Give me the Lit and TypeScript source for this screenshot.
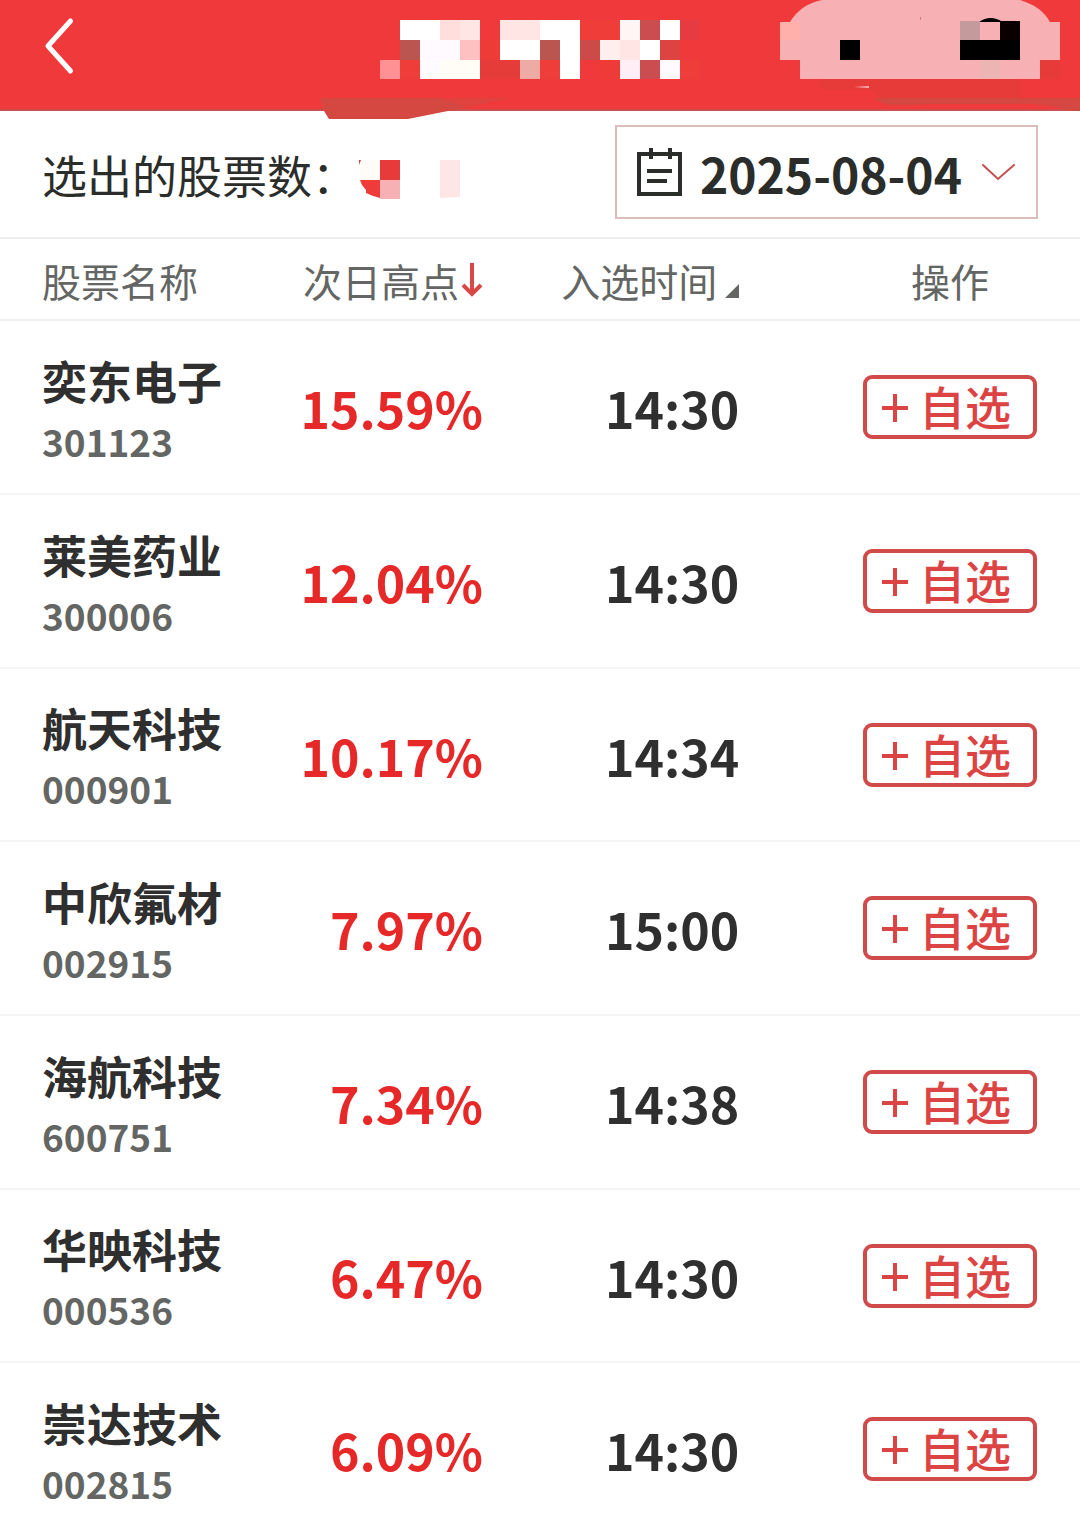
import { LitElement, html, svg, css } from "lit";
import { customElement, property, state } from "lit/decorators.js";

interface Stock {
  name: string;
  code: string;
  high: string;
  time: string;
}

const STOCKS: Stock[] = [
  { name: "奕东电子", code: "301123", high: "15.59%", time: "14:30" },
  { name: "莱美药业", code: "300006", high: "12.04%", time: "14:30" },
  { name: "航天科技", code: "000901", high: "10.17%", time: "14:34" },
  { name: "中欣氟材", code: "002915", high: "7.97%", time: "15:00" },
  { name: "海航科技", code: "600751", high: "7.34%", time: "14:38" },
  { name: "华映科技", code: "000536", high: "6.47%", time: "14:30" },
  { name: "崇达技术", code: "002815", high: "6.09%", time: "14:30" },
];

// Mosaic tiles: x, y, width, height, fill
type Tile = [number, number, number, number, string];

const TITLE_TILES: Tile[] = [
  [80, 60, 20, 19, "#ff9194"],
  [100, 60, 20, 19, "#ef3d39"],
  [100, 20, 40, 20, "#ffffff"],
  [140, 20, 20, 20, "#ffdedc"],
  [160, 20, 20, 20, "#ffe6e5"],
  [100, 40, 20, 20, "#bb5550"],
  [120, 40, 40, 20, "#fffaff"],
  [160, 40, 20, 20, "#ffc0c2"],
  [180, 40, 20, 20, "#ee3b37"],
  [120, 60, 20, 19, "#fdfbff"],
  [140, 60, 40, 19, "#fffdf5"],
  [180, 60, 40, 19, "#e63c39"],
  [200, 20, 40, 20, "#ffe6e5"],
  [240, 20, 40, 20, "#ffffff"],
  [200, 40, 40, 20, "#ffffff"],
  [240, 40, 20, 20, "#bb5550"],
  [260, 40, 20, 39, "#ffffff"],
  [220, 60, 20, 19, "#eeaaa5"],
  [240, 60, 20, 19, "#ef3d39"],
  [280, 20, 40, 20, "#ef3d39"],
  [280, 40, 20, 20, "#cc4a48"],
  [300, 40, 20, 20, "#ffeeee"],
  [300, 60, 20, 19, "#ef3b37"],
  [320, 20, 20, 20, "#fff5f5"],
  [320, 40, 20, 20, "#ffe6e4"],
  [320, 60, 20, 19, "#ffeef6"],
  [340, 20, 20, 20, "#cc4d4f"],
  [340, 40, 20, 20, "#ffffff"],
  [340, 60, 20, 19, "#cc4d4f"],
  [360, 20, 20, 20, "#ffffff"],
  [360, 40, 20, 20, "#dd4340"],
  [360, 60, 20, 19, "#fffaff"],
  [380, 20, 20, 20, "#e63b40"],
  [380, 60, 20, 19, "#ef3d39"],
];

const tiles = (list: Tile[]) =>
  list.map(([x, y, w, h, fill]) => svg`<rect x=${x} y=${y} width=${w} height=${h} fill=${fill} />`);

@customElement("screen-header")
export class ScreenHeader extends LitElement {
  static styles = css`
    :host {
      display: block;
    }
    .bar {
      position: relative;
      display: flex;
      align-items: flex-start;
      box-sizing: border-box;
      height: 111px;
      padding: 14px 28px;
      background: #f0393a;
      border-bottom: 2px solid #c9504e;
    }
    .back {
      display: flex;
      padding: 0;
      border: 0;
      background: none;
      cursor: pointer;
    }
    .title-art,
    .capsule-art {
      position: absolute;
      top: 0;
      pointer-events: none;
    }
    .title-art {
      left: calc(50% - 240px);
    }
    .capsule-art {
      right: 0;
    }
  `;

  render() {
    return html`
      <header class="bar">
        <button class="back" aria-label="返回">
          <svg width="64" height="64" viewBox="0 0 64 64" fill="none" stroke="#fff" stroke-width="5"
            stroke-linecap="round" stroke-linejoin="round" aria-hidden="true">
            <path d="M42.500 7 20 32 42.500 57" />
          </svg>
        </button>
        <svg class="title-art" width="440" height="120" viewBox="0 0 440 120" aria-hidden="true">
          <path d="M20 98H210L148 111 108 119H29L24 111Z" fill="#d54841" />
          <path d="M140 98H210L165 107Z" fill="#e04240" />
          <g shape-rendering="crispEdges">${tiles(TITLE_TILES)}</g>
        </svg>
        <svg class="capsule-art" width="340" height="111" viewBox="0 0 340 111" aria-hidden="true">
          <path d="M80 79H280V98H140L132 90 80 89Z" fill="#e63b38" />
          <rect x="300" y="60" width="20" height="19" fill="#e63b38" />
          <path d="M134 98H340V111H330Q315 105 285 104H200Q165 105 148 105 140 103 134 98Z" fill="#d54841" />
          <path d="M114 87 129 86V88Z" fill="#f7b1b4" />
          <path d="M50 22Q61 4 82 0H280Q301 6 310 22H320V60H300V79H60V60H40V22Z" fill="#f7b1b4" />
          <rect x="40" y="22" width="20" height="18" fill="#ffb0aa" />
          <path d="M239 22Q250 14 263 22Z" fill="#000" />
          <g shape-rendering="crispEdges">
            <rect x="180" y="17" width="1" height="3" fill="#d47b80" />
            <rect x="100" y="40" width="20" height="20" fill="#000" />
            <rect x="220" y="21" width="20" height="19" fill="#c59a9c" />
            <rect x="240" y="22" width="20" height="18" fill="#f7b1b4" />
            <rect x="260" y="21" width="20" height="19" fill="#0b0000" />
            <rect x="220" y="40" width="60" height="20" fill="#000" />
            <rect x="240" y="60" width="20" height="19" fill="#ecb4b3" />
          </g>
        </svg>
      </header>
    `;
  }
}

@customElement("summary-bar")
export class SummaryBar extends LitElement {
  @property() date = "";

  static styles = css`
    :host {
      display: block;
    }
    .summary {
      display: flex;
      align-items: center;
      justify-content: space-between;
      padding: 14px 42px 18px;
      border-bottom: 2px solid #eeeeee;
    }
    .count {
      display: flex;
      align-items: flex-end;
      padding-top: 5px;
      font-size: 45px;
      line-height: 64px;
      color: #2b2d2b;
    }
    .count svg {
      margin-bottom: 7px;
    }
    .date {
      display: flex;
      align-items: center;
      box-sizing: border-box;
      height: 94px;
      padding: 0 20px 0 19px;
      border: 2px solid #dfbcbc;
      background: #fff;
      color: #2b2d2b;
      font: inherit;
      font-size: 48px;
      font-weight: 700;
      line-height: 64px;
      cursor: pointer;
    }
    .value {
      margin: 2px 18px 0 16px;
    }
  `;

  render() {
    return html`
      <section class="summary">
        <div class="count">
          <span>选出的股票数：</span>
          <svg width="104" height="40" viewBox="0 0 104 40" aria-hidden="true">
            <g shape-rendering="crispEdges">
              <rect x="3" y="0" width="20" height="20" fill="#fffcf7" />
              <rect x="23" y="0" width="20" height="20" fill="#e63b3a" />
              <rect x="23" y="20" width="20" height="19" fill="#f7b1b4" />
            </g>
            <path d="M3 20H23V38Q15 36 9 33V30L5 25Z" fill="#ef3b3a" />
            <path d="M2 0H4L2 5Z" fill="#d0403f" />
            <path d="M83 0H103V37L83 38Z" fill="#fee6e6" />
          </svg>
        </div>
        <button class="date">
          <svg width="48" height="52" viewBox="0 0 48 52" fill="none" stroke="#2b2d2b" stroke-width="4" aria-hidden="true">
            <path d="M3 8H44V48H3ZM15 2V13M34 2V13" />
            <path d="M11 25H36M11 35H31" />
          </svg>
          <span class="value">${this.date}</span>
          <svg width="36" height="20" viewBox="0 0 36 20" fill="none" stroke="#c4504f" stroke-width="2"
            stroke-linecap="round" aria-hidden="true">
            <path d="M3 3 18 17 34 3" />
          </svg>
        </button>
      </section>
    `;
  }
}

@customElement("stock-table")
export class StockTable extends LitElement {
  @property({ attribute: false }) stocks: Stock[] = [];

  static styles = css`
    :host {
      display: block;
    }
    table {
      width: 100%;
      table-layout: fixed;
      border-collapse: collapse;
    }
    .c-name {
      width: 22%;
    }
    .c-high {
      width: 23%;
    }
    .c-time {
      width: 24%;
    }
    th,
    td {
      padding: 0;
      white-space: nowrap;
    }
    th {
      height: 78px;
      padding-top: 2px;
      border-bottom: 2px solid #eeeeee;
      color: #646664;
      font-size: 39px;
      font-weight: 400;
      line-height: 56px;
      text-align: right;
    }
    td {
      height: 172px;
      border-bottom: 2px solid #f5f5f5;
      color: #2f2f2f;
      text-align: right;
    }
    tr:nth-child(3n) td {
      height: 171px;
    }
    th.name,
    td.name {
      padding-left: 42px;
      text-align: left;
    }
    .high {
      padding-right: 3px;
    }
    .time {
      padding-right: 6px;
    }
    .action {
      padding-right: 43px;
    }
    .sort {
      display: inline-flex;
      align-items: center;
      padding: 0;
      border: 0;
      background: none;
      color: inherit;
      font: inherit;
      vertical-align: top;
      cursor: pointer;
    }
    .corner {
      margin: 21px 0 0 8px;
    }
    .action-label {
      display: inline-block;
      width: 174px;
      text-align: center;
    }
    .stock-name {
      display: block;
      padding-top: 3px;
      font-size: 45px;
      font-weight: 700;
      line-height: 64px;
    }
    .code {
      display: block;
      color: #646664;
      font-size: 37px;
      font-weight: 700;
      line-height: 56px;
    }
    td.high,
    td.time {
      font-size: 50px;
      font-weight: 700;
      line-height: 64px;
    }
    td.high {
      color: #e62828;
    }
    .add {
      display: inline-flex;
      align-items: center;
      justify-content: center;
      box-sizing: border-box;
      width: 174px;
      height: 64px;
      padding: 0 8px 4px 0;
      gap: 10px;
      border: 4px solid #d04a4a;
      border-radius: 9px;
      background: #fff;
      color: #dc4444;
      font: inherit;
      font-size: 46px;
      font-weight: 500;
      line-height: 56px;
      vertical-align: middle;
      cursor: pointer;
    }
    .add svg {
      margin-top: 6px;
    }
  `;

  render() {
    return html`
      <table>
        <colgroup>
          <col class="c-name" />
          <col class="c-high" />
          <col class="c-time" />
          <col />
        </colgroup>
        <thead>
          <tr>
            <th class="name" scope="col">股票名称</th>
            <th class="high" scope="col" aria-sort="descending">
              <button class="sort">
                次日高点
                <svg width="24" height="40" viewBox="0 0 24 40" fill="none" stroke="#d94646" stroke-width="4" aria-hidden="true">
                  <path d="M13 3V34M4 25 13 34 22 25" />
                </svg>
              </button>
            </th>
            <th class="time" scope="col">
              <button class="sort">
                入选时间
                <svg class="corner" width="14" height="14" viewBox="0 0 14 14" aria-hidden="true">
                  <path d="M14 0V14H0Z" fill="#646664" />
                </svg>
              </button>
            </th>
            <th class="action" scope="col"><span class="action-label">操作</span></th>
          </tr>
        </thead>
        <tbody>
          ${this.stocks.map(
            (s) => html`
              <tr>
                <td class="name">
                  <span class="stock-name">${s.name}</span>
                  <span class="code">${s.code}</span>
                </td>
                <td class="high">${s.high}</td>
                <td class="time">${s.time}</td>
                <td class="action">
                  <button class="add">
                    <svg width="28" height="28" viewBox="0 0 28 28" stroke="#dc4444" stroke-width="4" aria-hidden="true">
                      <path d="M14 0V28M1 14H27" />
                    </svg>
                    <span>自选</span>
                  </button>
                </td>
              </tr>
            `
          )}
        </tbody>
      </table>
    `;
  }
}

@customElement("app-root")
export class AppRoot extends LitElement {
  @state() private date = "2025-08-04";

  static styles = css`
    :host {
      display: block;
      overflow: hidden;
      background: #fff;
      font-family: "Noto Sans CJK SC", sans-serif;
    }
  `;

  render() {
    return html`
      <screen-header></screen-header>
      <main lang="zh-CN">
        <summary-bar .date=${this.date}></summary-bar>
        <stock-table .stocks=${STOCKS}></stock-table>
      </main>
    `;
  }
}
